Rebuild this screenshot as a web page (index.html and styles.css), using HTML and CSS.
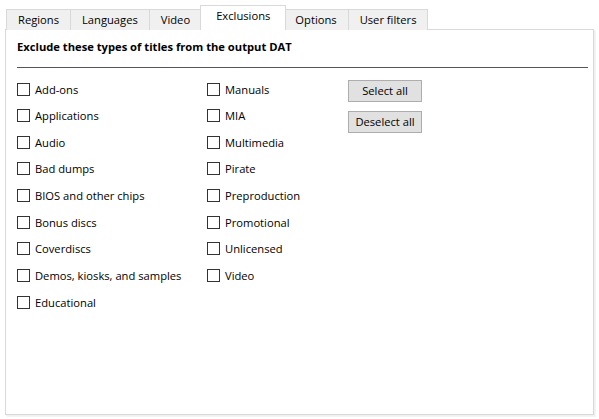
FILE: index.html
```html
<!DOCTYPE html>
<html>
<head>
<meta charset="utf-8">
<link rel="stylesheet" href="styles.css">
</head>
<body>
<div class="window">
  <div class="tabbar">
    <div class="tab tab-first">Regions</div>
    <div class="tab">Languages</div>
    <div class="tab">Video</div>
    <div class="tab tab-active">Exclusions</div>
    <div class="tab">Options</div>
    <div class="tab">User filters</div>
  </div>
  <div class="pane">
    <div class="heading">Exclude these types of titles from the output DAT</div>
    <div class="rule"></div>
    <div class="content">
      <div class="col col-1">
        <label class="check"><span class="box"></span>Add-ons</label>
        <label class="check"><span class="box"></span>Applications</label>
        <label class="check"><span class="box"></span>Audio</label>
        <label class="check"><span class="box"></span>Bad dumps</label>
        <label class="check"><span class="box"></span>BIOS and other chips</label>
        <label class="check"><span class="box"></span>Bonus discs</label>
        <label class="check"><span class="box"></span>Coverdiscs</label>
        <label class="check"><span class="box"></span>Demos, kiosks, and samples</label>
        <label class="check"><span class="box"></span>Educational</label>
      </div>
      <div class="col col-2">
        <label class="check"><span class="box"></span>Manuals</label>
        <label class="check"><span class="box"></span>MIA</label>
        <label class="check"><span class="box"></span>Multimedia</label>
        <label class="check"><span class="box"></span>Pirate</label>
        <label class="check"><span class="box"></span>Preproduction</label>
        <label class="check"><span class="box"></span>Promotional</label>
        <label class="check"><span class="box"></span>Unlicensed</label>
        <label class="check"><span class="box"></span>Video</label>
      </div>
      <div class="col col-3">
        <button class="btn">Select all</button>
        <button class="btn">Deselect all</button>
      </div>
    </div>
  </div>
</div>
</body>
</html>
```

FILE: styles.css
```css
* { box-sizing: border-box; }
html, body {
  margin: 0;
  padding: 0;
  background: #ffffff;
}
body {
  font-family: "Open Sans", "Noto Sans", sans-serif;
  font-size: 11.2px;
  color: #000;
  width: 599px;
  height: 419px;
  overflow: hidden;
}
.window {
  height: 419px;
  padding: 5px 5px 4px 5px;
  display: flex;
  flex-direction: column;
}
.tabbar {
  display: flex;
  align-items: flex-end;
  height: 25px;
  margin-bottom: -1px;
  padding-left: 1px;
  position: relative;
  z-index: 1;
}
.tab {
  height: 21px;
  padding: 0 11px 2px 11px;
  background: #f0f0f0;
  border: 1px solid #d9d9d9;
  border-bottom: none;
  border-left: none;
  display: flex;
  align-items: center;
  justify-content: center;
  white-space: nowrap;
}
.tab-first {
  border-left: 1px solid #d9d9d9;
}
.tab-active {
  height: 25px;
  background: #ffffff;
  border-left: 1px solid #d9d9d9;
  margin-left: -2px;
  margin-right: -2px;
  padding: 0 15px 5px 15px;
  position: relative;
  z-index: 2;
}
.pane {
  flex: 1;
  background: #ffffff;
  border: 1px solid #d9d9d9;
  box-shadow: 1px 1px 0 #f0f0f0, 2px 2px 0 #f4f4f4;
  padding: 9px 5px 0 11px;
}
.heading {
  font-weight: 700;
  height: 16px;
  line-height: 16px;
}
.rule {
  height: 1px;
  background: #555555;
  margin-top: 12px;
}
.content {
  display: flex;
  margin-top: 14.5px;
}
.col {
  display: flex;
  flex-direction: column;
  gap: 13.65px;
}
.col-1 { width: 190px; }
.col-2 { width: 141px; }
.col-3 {
  gap: 9px;
  margin-top: -3px;
}
.check {
  display: flex;
  align-items: center;
  height: 13px;
  white-space: nowrap;
}
.box {
  width: 13px;
  height: 13px;
  border: 1px solid #333333;
  background: #ffffff;
  margin-right: 5px;
  flex: none;
}
.btn {
  width: 74px;
  height: 22px;
  padding: 0 0 1px 0;
  font-family: inherit;
  font-size: inherit;
  color: #000;
  background: #e1e1e1;
  border: 1px solid #adadad;
  border-radius: 0;
}
```
